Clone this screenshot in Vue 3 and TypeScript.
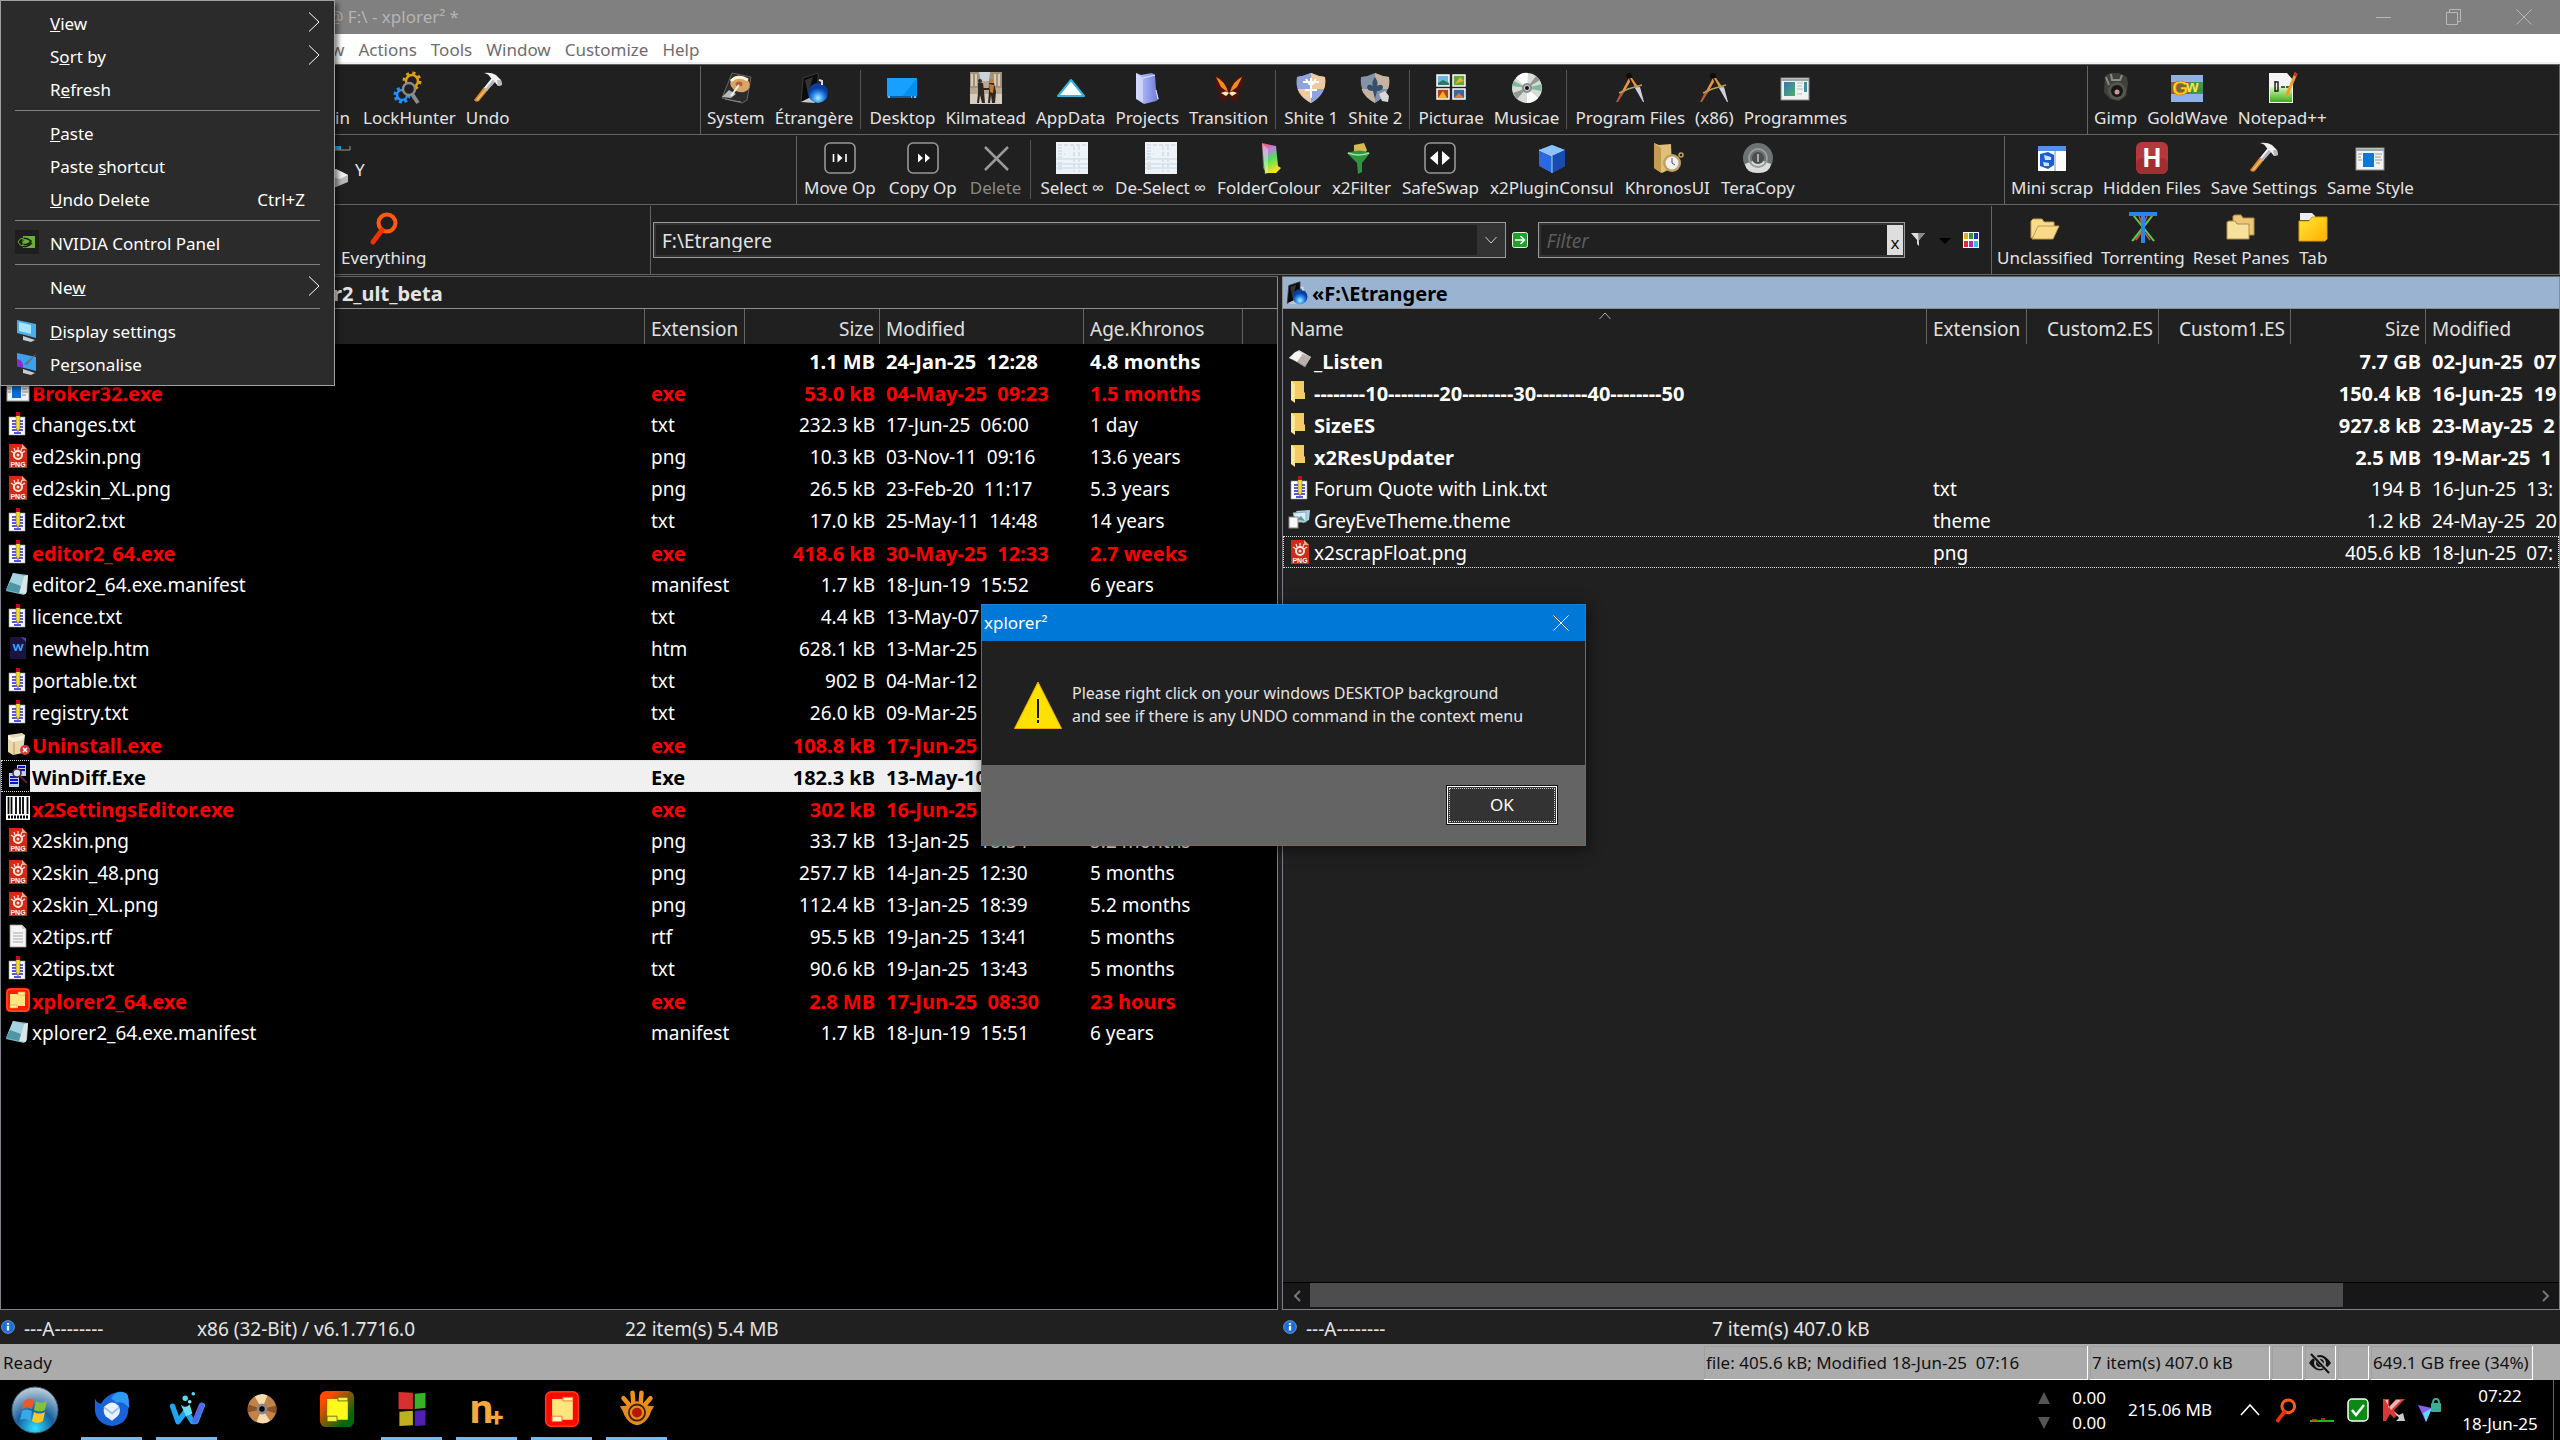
<script setup lang="ts">
interface Tool { icon: string; label: string; off?: boolean }
interface FileRow { icon: string; name: string; ext?: string; size: string; date: string; age?: string; kind?: string }
interface MenuItem { pre?: string; key?: string; post?: string; hint?: string; sub?: boolean; icon?: string; sep?: boolean }

const menuBar = ['w', 'Actions', 'Tools', 'Window', 'Customize', 'Help']

const bar1a: Tool[] = [
  { icon: '', label: 'Bin' },
  { icon: 'lock', label: 'LockHunter' },
  { icon: 'hammer', label: 'Undo' },
]
const bar1b: Tool[][] = [
  [{ icon: 'disk', label: 'System' }, { icon: 'etr', label: 'Étrangère' }],
  [
    { icon: 'desktop', label: 'Desktop' }, { icon: 'photo', label: 'Kilmatead' }, { icon: 'appdata', label: 'AppData' },
    { icon: 'projects', label: 'Projects' }, { icon: 'butterfly', label: 'Transition' },
  ],
  [{ icon: 'shield1', label: 'Shite 1' }, { icon: 'shield2', label: 'Shite 2' }],
  [{ icon: 'pictures', label: 'Picturae' }, { icon: 'cd', label: 'Musicae' }],
  [{ icon: 'compass', label: 'Program Files' }, { icon: 'compass', label: '(x86)' }, { icon: 'programs', label: 'Programmes' }],
]
const bar1c: Tool[] = [
  { icon: 'gimp', label: 'Gimp' }, { icon: 'goldwave', label: 'GoldWave' }, { icon: 'npp', label: 'Notepad++' },
]
const bar2b: Tool[][] = [
  [{ icon: 'moveop', label: 'Move Op' }, { icon: 'copyop', label: 'Copy Op' }, { icon: 'del', label: 'Delete', off: true }],
  [
    { icon: 'sheet', label: 'Select ∞' }, { icon: 'sheet', label: 'De-Select ∞' }, { icon: 'rainbow', label: 'FolderColour' },
    { icon: 'funnel', label: 'x2Filter' }, { icon: 'swap', label: 'SafeSwap' }, { icon: 'cube', label: 'x2PluginConsul' },
    { icon: 'khronos', label: 'KhronosUI' }, { icon: 'tera', label: 'TeraCopy' },
  ],
]
const bar2c: Tool[] = [
  { icon: 'scrap', label: 'Mini scrap' }, { icon: 'hidden', label: 'Hidden Files' },
  { icon: 'hammer', label: 'Save Settings' }, { icon: 'same', label: 'Same Style' },
]
const bar3c: Tool[] = [
  { icon: 'open', label: 'Unclassified' }, { icon: 'torrent', label: 'Torrenting' },
  { icon: 'reset', label: 'Reset Panes' }, { icon: 'tab', label: 'Tab' },
]

const left: FileRow[] = [
  { icon: '', name: '', size: '1.1 MB', date: '24-Jan-25  12:28', age: '4.8 months', kind: 'bold' },
  { icon: 'win', name: 'Broker32.exe', ext: 'exe', size: '53.0 kB', date: '04-May-25  09:23', age: '1.5 months', kind: 'exe' },
  { icon: 'txt', name: 'changes.txt', ext: 'txt', size: '232.3 kB', date: '17-Jun-25  06:00', age: '1 day' },
  { icon: 'png', name: 'ed2skin.png', ext: 'png', size: '10.3 kB', date: '03-Nov-11  09:16', age: '13.6 years' },
  { icon: 'png', name: 'ed2skin_XL.png', ext: 'png', size: '26.5 kB', date: '23-Feb-20  11:17', age: '5.3 years' },
  { icon: 'txt', name: 'Editor2.txt', ext: 'txt', size: '17.0 kB', date: '25-May-11  14:48', age: '14 years' },
  { icon: 'txt', name: 'editor2_64.exe', ext: 'exe', size: '418.6 kB', date: '30-May-25  12:33', age: '2.7 weeks', kind: 'exe' },
  { icon: 'note', name: 'editor2_64.exe.manifest', ext: 'manifest', size: '1.7 kB', date: '18-Jun-19  15:52', age: '6 years' },
  { icon: 'txt', name: 'licence.txt', ext: 'txt', size: '4.4 kB', date: '13-May-07' },
  { icon: 'htm', name: 'newhelp.htm', ext: 'htm', size: '628.1 kB', date: '13-Mar-25' },
  { icon: 'txt', name: 'portable.txt', ext: 'txt', size: '902 B', date: '04-Mar-12' },
  { icon: 'txt', name: 'registry.txt', ext: 'txt', size: '26.0 kB', date: '09-Mar-25' },
  { icon: 'box', name: 'Uninstall.exe', ext: 'exe', size: '108.8 kB', date: '17-Jun-25', kind: 'exe' },
  { icon: 'diff', name: 'WinDiff.Exe', ext: 'Exe', size: '182.3 kB', date: '13-May-10', kind: 'sel' },
  { icon: 'barcode', name: 'x2SettingsEditor.exe', ext: 'exe', size: '302 kB', date: '16-Jun-25', kind: 'exe' },
  { icon: 'png', name: 'x2skin.png', ext: 'png', size: '33.7 kB', date: '13-Jan-25  18:34', age: '5.2 months' },
  { icon: 'png', name: 'x2skin_48.png', ext: 'png', size: '257.7 kB', date: '14-Jan-25  12:30', age: '5 months' },
  { icon: 'png', name: 'x2skin_XL.png', ext: 'png', size: '112.4 kB', date: '13-Jan-25  18:39', age: '5.2 months' },
  { icon: 'rtf', name: 'x2tips.rtf', ext: 'rtf', size: '95.5 kB', date: '19-Jan-25  13:41', age: '5 months' },
  { icon: 'txt', name: 'x2tips.txt', ext: 'txt', size: '90.6 kB', date: '19-Jan-25  13:43', age: '5 months' },
  { icon: 'x2', name: 'xplorer2_64.exe', ext: 'exe', size: '2.8 MB', date: '17-Jun-25  08:30', age: '23 hours', kind: 'exe' },
  { icon: 'note', name: 'xplorer2_64.exe.manifest', ext: 'manifest', size: '1.7 kB', date: '18-Jun-19  15:51', age: '6 years' },
]
const right: FileRow[] = [
  { icon: 'book', name: '_Listen', size: '7.7 GB', date: '02-Jun-25  07', kind: 'bold' },
  { icon: 'folder', name: '--------10--------20--------30--------40--------50', size: '150.4 kB', date: '16-Jun-25  19', kind: 'bold' },
  { icon: 'folder', name: 'SizeES', size: '927.8 kB', date: '23-May-25  2', kind: 'bold' },
  { icon: 'folder', name: 'x2ResUpdater', size: '2.5 MB', date: '19-Mar-25  1', kind: 'bold' },
  { icon: 'txt', name: 'Forum Quote with Link.txt', ext: 'txt', size: '194 B', date: '16-Jun-25  13:' },
  { icon: 'theme', name: 'GreyEveTheme.theme', ext: 'theme', size: '1.2 kB', date: '24-May-25  20' },
  { icon: 'png', name: 'x2scrapFloat.png', ext: 'png', size: '405.6 kB', date: '18-Jun-25  07:', kind: 'focus' },
]

const context: MenuItem[] = [
  { key: 'V', post: 'iew', sub: true },
  { pre: 'S', key: 'o', post: 'rt by', sub: true },
  { pre: 'R', key: 'e', post: 'fresh' },
  { sep: true },
  { key: 'P', post: 'aste' },
  { pre: 'Paste ', key: 's', post: 'hortcut' },
  { key: 'U', post: 'ndo Delete', hint: 'Ctrl+Z' },
  { sep: true },
  { pre: 'NVIDIA Control Panel', icon: 'nvidia' },
  { sep: true },
  { pre: 'Ne', key: 'w', sub: true },
  { sep: true },
  { key: 'D', post: 'isplay settings', icon: 'display' },
  { pre: 'Pe', key: 'r', post: 'sonalise', icon: 'personal' },
]

const tasks = [
  { icon: 'bird', on: true }, { icon: 'wfox', on: true }, { icon: 'disc', on: false }, { icon: 'x2green', on: false },
  { icon: 'squares', on: true }, { icon: 'nplus', on: true }, { icon: 'x2red', on: true }, { icon: 'eye', on: true },
]

const folderPages = '<path d="M9 1l14 3 2 20 3 2-5 5H14l-2 1z" fill="url(#FILL)"/><path d="M9 1l6 6v25l-5-6z" fill="#fff" opacity=".35"/>'
const hammer = '<path d="M2 28L12 15l4 3-9 11q-3 2-5-1z" fill="#d98a2b"/><path d="M5 28L14 17" stroke="#f4bf70" stroke-width="1.500"/><path d="M12 16L21 5l4 3-10 11z" fill="#b4b8bc"/><path d="M13 16l8-10" stroke="#f4f4f4" stroke-width="2"/><path d="M12 1q7-1 12 2l5 5 1 5-4 1-4-5-4-4q-1-3-6-4z" fill="#f1f1f1"/><path d="M25 8l4 0 1 5-4 1z" fill="#bbb"/>'
const compass = '<circle cx="15" cy="4" r="3" fill="#0c0c0c"/><path d="M15 6L8 19l2 1 6-10z" fill="#e8963e"/><path d="M8 18L2 30l2 0 7-11z" fill="#b85a3a"/><path d="M16 6l6 11 3-1L18 6z" fill="#e8963e"/><path d="M21 16l8 14 1 0-4-15z" fill="#cfcfe0"/><path d="M5 21l9-4 14-4" stroke="#b8a05a" stroke-width="1.600" fill="none"/>'
const win32 = '<rect x="2" y="6" width="28" height="22" fill="#f2f2f2" stroke="#8a8a8a"/><path d="M2 8h28" stroke="#9aa" stroke-width="2"/>'
const shieldPath = 'M16 1q6 3 14 4 2 17-14 26Q0 22 2 5q8-1 14-4z'
const op = '<rect x="1" y="1" width="30" height="30" rx="5" fill="#1b1b1b" stroke="#989898" stroke-width="1.6"/>'

const icons: Record<string, string> = {
  lock: '<circle cx="19" cy="9" r="6" fill="none" stroke="#e0a010" stroke-width="2.500"/><circle cx="19" cy="9" r="8" fill="none" stroke="#e0a010" stroke-width="3" stroke-dasharray="3 3.3"/><circle cx="9" cy="23" r="5" fill="none" stroke="#1e90ff" stroke-width="2.500"/><circle cx="9" cy="23" r="7" fill="none" stroke="#1e90ff" stroke-width="3" stroke-dasharray="3 2.5"/><circle cx="16" cy="17" r="6" fill="#222" stroke="#8b8b8b" stroke-width="2.4"/><path d="M19 22l6 9" stroke="#8b8b8b" stroke-width="4"/>',
  hammer,
  disk: '<path d="M12 1l19 4-4 23-5 3L2 26z" fill="#2b2b2b" stroke="#666"/><ellipse cx="20" cy="12" rx="10" ry="8" fill="#d9a468" transform="rotate(20 20 12)"/><path d="M11 9q7-7 17-1" stroke="#fff0d8" stroke-width="3" fill="none"/><ellipse cx="19" cy="12" rx="3.500" ry="2.500" fill="#b85f30"/><path d="M2 25l7-7 7 4-5 4z" fill="#b8b8b8"/><path d="M11 24l8-11" stroke="#f0f0f0" stroke-width="2"/><path d="M5 27l16 3" stroke="#888"/>',
  etr: '<path d="M5 6L20 1v22L3 30z" fill="#0b0b0b" stroke="#3a3a3a"/><path d="M7 8l8-3-5 17z" fill="#333"/><path d="M3 30l10-5 4 6z" fill="#c8c8c8"/><circle cx="20" cy="21" r="10" fill="url(#orb)"/><path d="M21 8l3 1v4" stroke="#ddd" stroke-width="2" fill="none"/>',
  desktop: '<rect x="1" y="6" width="30" height="20" fill="#18a0ff"/><path d="M31 6v20L15 26z" fill="#0b8cf0"/><path d="M1 25h30" stroke="#0b5fa8" stroke-width="2"/><path d="M2 25h2M25 25h1M28 25h2" stroke="#fff" stroke-width="1"/>',
  photo: '<rect width="32" height="32" fill="#b9a894"/><path d="M0 0h32v9H0z" fill="#c9d2dc"/><path d="M0 0h9l3 16H0zM32 0H20l-2 16h14z" fill="#a3917c"/><path d="M2 2v12M6 2v12M25 2v12M29 2v12" stroke="#d6cbb8" stroke-width="2"/><rect y="22" width="32" height="10" fill="#d9cdbd"/><path d="M8 11h5l1 8 1 12h-3l-2-8-1 8H7l1-10zM19 11h5l2 9-1 11h-3l-1-8-1 8h-2l1-12z" fill="#2e2824"/><path d="M12 17h8" stroke="#2e2824" stroke-width="2"/><circle cx="10" cy="9" r="2" fill="#3c2c22"/><circle cx="21" cy="9" r="2" fill="#c07a30"/><path d="M19 12l5 1-1 8-3-1z" fill="#c27a2c"/>',
  appdata: '<path d="M16 8l13 16H3z" fill="#fff" stroke="#35b4dc" stroke-width="2" stroke-linejoin="round"/>',
  projects: '<path d="M5 1l5 2 11-2 3 2 1 15 3 9-3 2-12 3-8-5z" fill="url(#violet)"/><path d="M5 1l7 5v25l-7-5z" fill="#dfe3ff" opacity=".6"/><path d="M12 6l12-3M25 18l2 9" stroke="#e4e8ff" fill="none"/>',
  butterfly: '<path d="M2 3q10 3 14 15Q20 6 30 3q1 12-4 16 0 8-5 11-4-3-5-9-1 6-5 9-5-3-5-11-5-4-4-16z" fill="#4a140c"/><path d="M3 5q9 4 12 15-5-3-7-5zM29 5q-9 4-12 15 5-3 7-5z" fill="#f08a22"/><path d="M8 21q5-3 8 0 3-3 8 0l-5 3-3-3-3 3z" fill="#ffe9b8"/>',
  shield1: `<path d="${shieldPath}" fill="#d8d4dc"/><path d="M16 1q6 3 14 4 1 8-1 12H16zM16 17v14Q5 25 2.500 17z" fill="#f0c8a4"/><path d="M16 1Q8 4 2 5q-1 7 .5 12H16zM16 31q10-6 13-14H16z" fill="#8fa4dc"/><path d="M8 10h16M16 6v20M10 18h12M11 7l4 6M21 7l-4 6" stroke="#fff" stroke-width="2"/>`,
  shield2: `<path d="${shieldPath}" fill="#8293a8"/><path d="M16 1q6 3 14 4 1 8-1 12H16zM16 17v14Q5 25 2.500 17z" fill="#c6b3a0"/><path d="M16 5q4 6 2 9 5-3 6 1 0 4-6 4l-2 8-2-8q-6 0-6-4 1-4 6-1-2-3 2-9z" fill="#35506e"/><path d="M20 22l6-3 4 5-1 6-6-1z" fill="#d8d8d8"/>`,
  pictures: '<g stroke="#fff" stroke-width="1.5"><rect x="2" y="3" width="12" height="11" fill="#6fb5df"/><rect x="18" y="3" width="12" height="11" fill="#62a83a"/><rect x="2" y="17" width="12" height="10" fill="#b4401c"/><rect x="18" y="17" width="12" height="10" fill="#3a66a8"/></g><path d="M3 11l5-3 6 3v2H3z" fill="#2a7a62"/><path d="M20 12l5-7 4 4z" fill="#e8b030"/><path d="M3 26l5-7 4 7z" fill="#f0b020"/><path d="M19 26l5-5 5 5z" fill="#e87a28"/>',
  cd: '<circle cx="16" cy="16" r="15" fill="#d8dcd6"/><path d="M16 16L5 6q5-6 12-5zM16 16l11 10q-4 5-11 5z" fill="#fff"/><path d="M16 16L1 14l2-5zM16 16l15-4-1 7z" fill="#7fb89a"/><path d="M16 16L6 27l-4-6zM16 16L25 4l4 4z" fill="#8f9a8e"/><circle cx="16" cy="16" r="5" fill="#8a9090"/><circle cx="16" cy="16" r="2.500" fill="#111" stroke="#ddd"/>',
  compass,
  programs: win32 + '<rect x="5" y="10" width="11" height="14" fill="url(#bluegreen)"/><path d="M18 11h6M18 14h5M18 17h6M18 22h5" stroke="#bbb"/><rect x="25" y="10" width="3" height="10" fill="#3f8fa0"/>',
  gimp: '<path d="M5 4l5-3h9l8 4 1 7-2 12-7 5-9-2-6-7z" fill="#40403c"/><circle cx="17" cy="19" r="9" fill="#55554e"/><circle cx="17" cy="19" r="6" fill="#171717"/><circle cx="17" cy="20" r="2.500" fill="#c99"/><path d="M6 5l3 8M11 2l1 6h8l2-5" stroke="#8d8d84" stroke-width="2" fill="none"/>',
  goldwave: '<rect y="3" width="32" height="27" fill="#8fb0e8"/><path d="M0 10h32v12H0z" fill="#b04848"/><path d="M18 10h14v12H18z" fill="#3c9a4a"/><path d="M0 14q8-9 16 0t16 0v6H0z" fill="#384" opacity=".5"/><text x="1" y="23" font-size="21" font-weight="bold" font-family="Liberation Sans, sans-serif" fill="#ffd21c" stroke="#a86a00" stroke-width=".5">G</text><text x="15" y="20" font-size="16" font-weight="bold" font-family="Liberation Sans, sans-serif" fill="#ffe23c">w</text>',
  npp: '<path d="M3 1h18l6 7v23H3z" fill="#f4f4f4"/><path d="M4 15h22v15H4z" fill="url(#green)"/><path d="M9 9v11M9 10h3v9H9M15 15h4M20 15h4" stroke="#222" stroke-width="1.500" fill="none"/><path d="M29 0l2 3-9 21-3 2 1-5z" fill="#f0a020"/><path d="M29 0l3 2-2 3-2-2z" fill="#d23"/>',
  moveop: op + '<path d="M9.500 12v8M22 12v8" stroke="#fff" stroke-width="1.600"/><path d="M13.500 11.500l5 4.500-5 4.500z" fill="#fff"/>',
  copyop: op + '<path d="M11 11.500l5 4.500-5 4.500zM18 11.500l5 4.500-5 4.500z" fill="#fff"/>',
  swap: op + '<path d="M14 9v14l-8-7zM18 9v14l8-7z" fill="#fff"/>',
  del: '<path d="M5 5l23 23M28 5L5 28" stroke="#9a9a9a" stroke-width="2.500"/>',
  sheet: '<rect width="32" height="32" fill="#eef3f8"/><path d="M2 3h28M2 6h6M2 9h5M2 12h7M2 15h6M2 21h6M2 24h5M2 27h6M18 4v26M23 4v26" stroke="#c6d0d9" stroke-width="1" stroke-dasharray="4 2"/><path d="M0 17h32M0 22h32M0 26h32" stroke="#cfe4f0" stroke-width="1.500"/>',
  rainbow: folderPages.replace('FILL', 'rain'),
  funnel: '<path d="M9 3l10-2 3 7-5 9H9z" fill="#d8b850"/><path d="M2 11q13-5 23 0l-8 10v9l-4 2-1-11z" fill="#2f9440"/><path d="M3 11q11 4 21 0" stroke="#9fe0a0" stroke-width="1.500" fill="none"/>',
  cube: '<path d="M16 3l13 5v16l-13 7-13-7V8z" fill="#2a6ae0"/><path d="M16 3l13 5-13 6L3 8z" fill="#8ec2ff"/><path d="M16 14v17l13-7V8z" fill="#184cb0"/><path d="M3 8l13 6v17" fill="none" stroke="#a9d0ff"/>',
  khronos: '<path d="M3 1l5 2 12-1 1 24-10 5-8-5z" fill="#e0c078"/><path d="M3 1l7 5v25l-7-5z" fill="#c49c50"/><circle cx="21" cy="21" r="9" fill="#c2a060"/><circle cx="21" cy="21" r="6.500" fill="#eef0f2"/><path d="M21 16v5l3 2" stroke="#555" fill="none"/><circle cx="30" cy="13" r="2" fill="none" stroke="#c2a060" stroke-width="1.500"/>',
  tera: '<circle cx="16" cy="16" r="15" fill="#6d7372"/><path d="M3 22q1 9 13 9t13-9l-8-3q-5 5-10 0z" fill="#dcdcdc"/><circle cx="16" cy="16" r="9" fill="none" stroke="#989c9b" stroke-width="2"/><circle cx="16" cy="16" r="6" fill="#4a4f4e"/><path d="M16 12v8" stroke="#aaa" stroke-width="2"/>',
  scrap: '<rect x="2" y="4" width="28" height="25" fill="#fff"/><rect x="2" y="4" width="28" height="5" fill="#5590ec"/><path d="M4 12l8-2 6 3v10l-6 4-8-3z" fill="#1b5fd0"/><path d="M8 13l7 2v3H9zM7 20l6 1v3H8z" fill="#cfe3ff"/><path d="M19 9v20" stroke="#88a"/>',
  hidden: '<rect width="32" height="32" rx="6" fill="#b5383c"/><rect y="16" width="32" height="16" rx="6" fill="#a02e32"/><text x="16" y="25" text-anchor="middle" font-size="26" font-weight="bold" font-family="Roboto, sans-serif" fill="#fff">H</text>',
  same: win32 + '<rect x="9" y="11" width="11" height="14" fill="#0a78d7"/><path d="M4 12h4M4 15h3M4 18h4M21 12h7M21 15h6M21 18h7M22 21h4" stroke="#999"/>',
  open: '<path d="M2 26V9l2-2h9l2 3h10v4z" fill="#f7dc90" stroke="#c89a48"/><path d="M9 14h21l-6 13H3z" fill="#f9d98a" stroke="#c89a48"/>',
  torrent: '<path d="M6 3l21 26M6 29L26 3M12 4l5 13-8 11M20 4l-5 13 8 11" stroke="#d05050" stroke-width="1.500" fill="none"/><path d="M5 29L25 4M27 29L7 4" stroke="#4ad04a" stroke-width="2"/><path d="M2 2h28M16 2v29" stroke="#2a86ea" stroke-width="4"/>',
  reset: '<path d="M8 11V4l2-1h6l2 3h11v17H8z" fill="#e9c878" stroke="#b68c40"/><path d="M2 27V10l2-1h6l2 3h12v15z" fill="#f5e19c" stroke="#b68c40"/>',
  tab: '<path d="M3 1h12l3 3v4H3z" fill="#e8edf2"/><path d="M2 9h10l3-4h15v22l-2 2H2z" fill="url(#gold)" stroke="#e09a10"/>',
  search: '<circle cx="19" cy="11" r="8.500" fill="none" stroke="#ff5a10" stroke-width="4"/><path d="M14 18L5 30" stroke="#f03008" stroke-width="5" stroke-linecap="round"/>',
  // 24 × 24 file icons
  win: '<rect x="1" y="1" width="22" height="20" fill="#f2f2f2" stroke="#999"/><rect x="6" y="4" width="9" height="14" fill="#0a6fd0"/><path d="M2 6h3M2 9h3M2 12h3M16 6h6M16 9h5M16 12h6M16 15h4" stroke="#888"/>',
  txt: '<path d="M3 5h16v18H3z" fill="#fff" stroke="#999" stroke-width=".6"/><path d="M6 9h11M6 12h11M6 15h11M6 18h11M8 21h7" stroke="#22c" stroke-width="1.500"/><path d="M10 3h4v13l-2 4-2-4z" fill="#f2dc3c" stroke="#6a5a10" stroke-width=".5"/><path d="M10 0h4v4h-4z" fill="#d00028"/>',
  png: '<path d="M3 0h13l5 5v19H3z" fill="#d42a12"/><path d="M16 0l5 5h-5z" fill="#f0a090"/><circle cx="12" cy="11" r="4" fill="none" stroke="#f3e8e4" stroke-width="2"/><circle cx="12" cy="11" r="1.500" fill="#f3e8e4"/><path d="M8 4l1 3M12 3v4M16 4l-1 3M5 7l3 2M19 7l-3 2" stroke="#f3e8e4" stroke-width="1.200"/><text x="12" y="22.500" text-anchor="middle" font-size="7" font-weight="bold" font-family="Liberation Sans, sans-serif" fill="#fff">PNG</text>',
  note: '<path d="M7 1l15 2-1 17-3 3L0 19z" fill="#7ebcc9"/><path d="M7 1l11 3-5 17L0 18z" fill="#a5d4de"/><path d="M13 21L18 4l4-1-2 19z" fill="#dfe5e6"/><path d="M4 10l11 4-2 7L0 18z" fill="#4f96a8"/>',
  htm: '<path d="M4 1h12l4 4v18H4z" fill="#1b1340"/><path d="M15 1l5 5V2z" fill="#4b46b0"/><text x="12" y="15" text-anchor="middle" font-size="14" font-weight="bold" font-family="Lato, sans-serif" fill="#35a8ff">w</text>',
  box: '<path d="M2 3l14-2 3 2-2 18-10 2-5-3z" fill="#e8d8b0"/><path d="M2 3l5 3 12-3-2 5-10 2-5-3z" fill="#f9f2df"/><path d="M8 10v12" stroke="#c8903c"/><circle cx="19" cy="18" r="5" fill="#d04040"/><path d="M17 16l4 4M21 16l-4 4" stroke="#fff" stroke-width="1.500"/>',
  diff: '<rect x="11" y="1" width="9" height="11" fill="#b9d4ee"/><rect x="3" y="9" width="10" height="14" fill="#b9d4ee"/><path d="M12 3h7M12 6h7M4 13h8M4 16h8M4 19h8" stroke="#11c" stroke-width="2"/><circle cx="11" cy="9" r="4" fill="#cfe4ff" stroke="#5a2040" stroke-width="1.600"/><path d="M14 12l7 7" stroke="#5a2040" stroke-width="2"/>',
  barcode: '<rect width="24" height="24" fill="#fff"/><path d="M2.500 1v17M5.500 1v17M10 1v17M14 1v17M17 1v17M21.500 1v17" stroke="#000" stroke-width="1.800"/><path d="M2 21h20" stroke="#000" stroke-width="3" stroke-dasharray="2 1"/>',
  rtf: '<path d="M4 1h12l4 4v18H4z" fill="#f5f5f5" stroke="#999" stroke-width=".8"/><path d="M7 9h10M7 12h10M7 15h10M7 18h10" stroke="#a8a8a8"/><path d="M16 1v4h4" fill="#ccc"/>',
  x2: '<rect width="24" height="24" rx="4" fill="#ff1a00"/><rect x="1" y="1" width="22" height="22" rx="4" fill="none" stroke="#ff6a30"/><path d="M4 6h8V4h7v14h-7v2H4z" fill="#ffe680"/><path d="M12 4h7v3h-7zM4 17h7v3H4z" fill="#fff3b8" stroke="#e0a020" stroke-width=".7"/>',
  book: '<path d="M1 10L11 2l12 7-6 9z" fill="#ddd"/><path d="M1 10l5-5q4-4 8 1l-5 8q-3-4-8-4z" fill="#f7f5f0"/><path d="M9 14l6-8 8 3-6 10z" fill="#b8b2aa"/><path d="M9 14l8 5 1-2" stroke="#777" fill="none"/>',
  folder: '<path d="M3 1h13v11l1 1v6H3z" fill="#f3cc62"/><path d="M3 1l4 3v19l-4-3z" fill="#fde79a"/>',
  theme: '<path d="M8 3l14-1-1 10-6 3z" fill="#a8d4e4"/><path d="M5 5l13-1v10H8z" fill="#d9eef4" stroke="#8ab"/><path d="M8 12l5-4 4 5z" fill="#5a9a9a"/><rect x="1" y="9" width="9" height="11" fill="#f8f8f8" stroke="#888"/>',
  nvidia: '<rect width="24" height="24" fill="#1e1e1e"/><path d="M8 6h12v12H8z" fill="#6fae3c"/><path d="M3 12q6-7 13-1-3 5-8 3-2-2 1-4M5 14q5 6 12-1" stroke="#16240a" stroke-width="1.500" fill="none"/><path d="M3 12q2-4 5-4v8q-3 0-5-4z" fill="none" stroke="#6fae3c"/>',
  display: '<path d="M2 2l19 4v14L2 15z" fill="#48aef0"/><path d="M4 4l12 3v9L4 13z" fill="#a8e4ff"/><path d="M8 18l6 2 6 2-4 2-8-2z" fill="#c4ccd4"/>',
  personal: '<path d="M2 2l19 4v14L2 15z" fill="#3aa0f0"/><path d="M2 8q7 2 6 9l-6-2z" fill="#8a28d8"/><path d="M22 2L9 13l3 1z" fill="#6a7078"/><path d="M8 18l6 2 6 2-4 2-8-2z" fill="#c4ccd4"/>',
  info: '<circle cx="12" cy="12" r="11" fill="#1b6fd8" stroke="#9cc4f4" stroke-width="1"/><path d="M12 10v8M12 5v3" stroke="#fff" stroke-width="4"/>',
  // taskbar, 40 × 40
  bird: '<path d="M1 8q2 6 7 6Q13 4 26 1q9-1 11 6l2 3-1 13Q36 37 20 39 3 37 1 22z" fill="#1a62d8"/><path d="M19 8q6-8 13-7 6 1 6 6l1 12q-6-8-14-6z" fill="#2f9af4"/><path d="M12 17q8-8 15-1 4 7-1 12l-6 5-7-5q-4-5-1-11z" fill="#e8f2fc"/><path d="M11 18l9 7 8-7" fill="none" stroke="#9cc4ee" stroke-width="2"/>',
  wfox: '<path d="M4 17l6 17 9-12 7 12h4l7-18" fill="none" stroke="#1ea4f0" stroke-width="6" stroke-linejoin="round" stroke-linecap="round"/><path d="M29 33l7-17" stroke="#5668e8" stroke-width="6" stroke-linecap="round"/><path d="M13 15q5 5 10 0l3 10-7 3z" fill="#60e0f0"/><circle cx="18" cy="8" r="3" fill="#5ad8ee"/><circle cx="27" cy="3" r="2" fill="#5ad8ee"/><circle cx="23" cy="12" r="2" fill="#8cf0f4"/>',
  disc: '<circle cx="20" cy="20" r="16" fill="#c08448"/><path d="M20 20L12 6q8-5 14-1zM20 20l9 13q-7 5-15 1z" fill="#f4dcb0"/><path d="M20 20L4 24l1-9zM20 20l16-4v9z" fill="#8a5424"/><circle cx="20" cy="20" r="6" fill="#888"/><circle cx="20" cy="20" r="3" fill="#000"/>',
  x2green: '<rect x="1" y="0" width="38" height="40" rx="7" fill="url(#rg)"/><path d="M9 9h12V7h11v25H20v2H9z" fill="#fff81c"/><path d="M21 7h11v4H21zM9 28h11v6H9z" fill="#f0f840" stroke="#6a6a10"/>',
  squares: '<path d="M5 1l16 1v18L5 20z" fill="#d83030"/><path d="M23 3l12-1v17l-12 1z" fill="#38b028"/><path d="M6 23l15-1v16L6 39z" fill="#c0b020"/><path d="M23 22l12-1v17l-12 1z" fill="#5020b0"/>',
  nplus: '<text x="1" y="36" font-size="46" font-weight="bold" font-family="Roboto, sans-serif" fill="#f8a838">n</text><text x="23" y="39" font-size="28" font-weight="bold" font-family="Roboto, sans-serif" fill="#f8a838">+</text>',
  x2red: '<rect x="1" y="0" width="38" height="40" rx="7" fill="#ff0800"/><rect x="2" y="1" width="36" height="38" rx="6" fill="none" stroke="#ff5a20"/><path d="M9 9h12V7h11v25H20v2H9z" fill="#ffe67c"/><path d="M21 7h11v4H21zM9 28h11v6H9z" fill="#fff6c8" stroke="#e87030"/>',
  eye: '<path d="M5 8l7 8M15 2l1 12M25 2l-1 12M35 8l-7 8" stroke="#f09018" stroke-width="5" stroke-linecap="round"/><path d="M1 17q9 0 19-6 10 6 19 6-4 6-5 10-5 10-14 11-9-1-14-11-1-4-5-10z" fill="#e88a18"/><circle cx="20" cy="24" r="9" fill="none" stroke="#3a2008" stroke-width="2"/><circle cx="20" cy="24" r="5.500" fill="#b01808"/>',
}
</script>

<template>
  <div class="screen">
    <svg class="defs" width="0" height="0" aria-hidden="true">
      <defs>
        <radialGradient id="orb" cy=".75"><stop stop-color="#a8f0ff" /><stop offset=".6" stop-color="#2684e8" /><stop offset="1" stop-color="#0a3fa0" /></radialGradient>
        <linearGradient id="violet"><stop stop-color="#c4ccff" /><stop offset="1" stop-color="#6a78d8" /></linearGradient>
        <linearGradient id="rain" x2=".3" y2="1"><stop stop-color="#f05050" /><stop offset=".3" stop-color="#c080e0" /><stop offset=".6" stop-color="#50e060" /><stop offset="1" stop-color="#f8e020" /></linearGradient>
        <linearGradient id="green" y2="1" x2="0"><stop stop-color="#d8f8c0" /><stop offset="1" stop-color="#38b010" /></linearGradient>
        <linearGradient id="bluegreen" x2="1" y2="1"><stop stop-color="#3a78b8" /><stop offset="1" stop-color="#4fae6a" /></linearGradient>
        <linearGradient id="gold" x2="1" y2="1"><stop stop-color="#ffe838" /><stop offset="1" stop-color="#ffae00" /></linearGradient>
        <linearGradient id="rg" x2="1" y2="1"><stop offset=".2" stop-color="#ff4a00" /><stop offset=".8" stop-color="#006a08" /></linearGradient>
        <radialGradient id="start" cy=".9" r=".9"><stop stop-color="#30e0ff" /><stop offset=".45" stop-color="#1560a0" /><stop offset="1" stop-color="#c8d4dc" /></radialGradient>
      </defs>
    </svg>

    <header class="title">
      <span class="title-text">@ F:\ - xplorer² *</span>
      <span class="win-buttons">
        <button aria-label="Minimise"><svg viewBox="0 0 16 16"><path d="M0 8.500h15" /></svg></button>
        <button aria-label="Restore"><svg viewBox="0 0 16 16"><path d="M.5 3.500h11v12H.5zM3.500 3.500v-3h11v12h-3" /></svg></button>
        <button aria-label="Close"><svg viewBox="0 0 16 16"><path d="M.5.5l15 15M15.500.5l-15 15" /></svg></button>
      </span>
    </header>

    <nav class="menubar"><button v-for="m in menuBar" :key="m">{{ m }}</button></nav>

    <section class="band band1">
      <div class="group covered">
        <button v-for="t in bar1a" :key="t.label" class="tool">
          <svg viewBox="0 0 32 32" v-html="t.icon ? icons[t.icon] : ''" /><span>{{ t.label }}</span>
        </button>
      </div>
      <div class="group">
        <div v-for="(set, i) in bar1b" :key="i" class="set">
          <button v-for="t in set" :key="t.label" class="tool">
            <svg viewBox="0 0 32 32" v-html="icons[t.icon]" /><span>{{ t.label }}</span>
          </button>
        </div>
      </div>
      <div class="group">
        <button v-for="t in bar1c" :key="t.label" class="tool">
          <svg viewBox="0 0 32 32" v-html="icons[t.icon]" /><span>{{ t.label }}</span>
        </button>
      </div>
    </section>

    <section class="band band2">
      <div class="group drives">
        <svg viewBox="0 0 24 48">
          <path d="M0 9h22V5" fill="none" stroke="#999" /><path d="M0 5h13v4H0z" fill="#2aa0dc" />
          <path d="M0 29l8-1 12 6v7L8 46H0z" fill="#b8b8b8" /><path d="M0 29l8-1 12 6-8 4-12-3z" fill="#f0f0f0" />
        </svg>
        <span>Y</span>
      </div>
      <div class="group wide">
        <div v-for="(set, i) in bar2b" :key="i" class="set">
          <button v-for="t in set" :key="t.label" class="tool" :disabled="t.off">
            <svg viewBox="0 0 32 32" v-html="icons[t.icon]" /><span>{{ t.label }}</span>
          </button>
        </div>
      </div>
      <div class="group">
        <button v-for="t in bar2c" :key="t.label" class="tool">
          <svg viewBox="0 0 32 32" v-html="icons[t.icon]" /><span>{{ t.label }}</span>
        </button>
      </div>
    </section>

    <section class="band band3">
      <div class="group search">
        <button class="tool"><svg viewBox="0 0 32 32" v-html="icons.search" /><span>Everything</span></button>
      </div>
      <div class="group address">
        <div class="combo">
          <input value="F:\Etrangere" aria-label="Address" />
          <button aria-label="Show history"><svg viewBox="0 0 12 8"><path d="M.5 1l5.500 6 5.500-6" /></svg></button>
        </div>
        <button class="go" aria-label="Go">
          <svg viewBox="0 0 16 16"><rect x=".5" y=".5" width="15" height="15" rx="2" fill="#1fa02c" stroke="#e6f4e6" /><path d="M3 8h9M8.500 4l4 4-4 4" fill="none" stroke="#fff" stroke-width="1.600" /></svg>
        </button>
        <div class="filter">
          <input placeholder="Filter" aria-label="Filter" />
          <button aria-label="Clear filter">x</button>
        </div>
        <svg class="mini" viewBox="0 0 16 16"><path d="M1 1h14L9 8v6l-2-2V8z" fill="#ddd" /><path d="M8 1h7L9 8v6z" fill="#888" /></svg>
        <svg class="mini arrow" viewBox="0 0 16 16"><path d="M2 6h12l-6 6z" fill="#000" /></svg>
        <svg class="mini" viewBox="0 0 16 16"><path d="M0 0h16v16H0z" fill="#fff" /><path d="M1 1h4v6H1z" fill="#e8a820" /><path d="M6 1h4v6H6z" fill="#20a020" /><path d="M11 1h4v6h-4z" fill="#2828c8" /><path d="M1 9h4v6H1z" fill="#e82828" /><path d="M6 9h4v6H6z" fill="#c020c0" /><path d="M11 9h4v6h-4z" fill="#20c8e8" /></svg>
      </div>
      <div class="group tight">
        <button v-for="t in bar3c" :key="t.label" class="tool">
          <svg viewBox="0 0 32 32" v-html="icons[t.icon]" /><span>{{ t.label }}</span>
        </button>
      </div>
    </section>

    <main class="panes">
      <section class="pane pane-left">
        <h2 class="covered-title">er2_ult_beta</h2>
        <div class="list">
          <table>
            <colgroup><col class="c-name" /><col class="c-ext" /><col class="c-size" /><col class="c-date" /><col class="c-age" /><col /></colgroup>
            <thead><tr><th></th><th>Extension</th><th class="num">Size</th><th>Modified</th><th>Age.Khronos</th><th></th></tr></thead>
            <tbody>
              <tr v-for="(f, i) in left" :key="i" :class="f.kind">
                <td class="name"><div><svg viewBox="0 0 24 24" v-html="f.icon ? icons[f.icon] : ''" /><span>{{ f.name }}</span></div></td>
                <td>{{ f.ext }}</td><td class="num">{{ f.size }}</td><td>{{ f.date }}</td><td>{{ f.age }}</td><td></td>
              </tr>
            </tbody>
          </table>
        </div>
        <footer>
          <svg viewBox="0 0 24 24" v-html="icons.info" /><span class="f-attr">---A--------</span>
          <span class="f-ver">x86 (32-Bit) / v6.1.7716.0</span><span>22 item(s) 5.4 MB</span>
        </footer>
      </section>

      <section class="pane pane-right">
        <h2><svg viewBox="0 0 32 32" v-html="icons.etr" />«F:\Etrangere</h2>
        <div class="list">
          <table>
            <colgroup><col class="c-name" /><col class="c-ext" /><col class="c-custom" /><col class="c-custom" /><col class="c-size" /><col /></colgroup>
            <thead>
              <tr>
                <th class="sorted">Name<svg viewBox="0 0 12 8"><path d="M.5 7L6 1l5.500 6" /></svg></th>
                <th>Extension</th><th class="num">Custom2.ES</th><th class="num">Custom1.ES</th><th class="num">Size</th><th>Modified</th>
              </tr>
            </thead>
            <tbody>
              <tr v-for="(f, i) in right" :key="i" :class="f.kind">
                <td class="name"><div><svg viewBox="0 0 24 24" v-html="icons[f.icon]" /><span>{{ f.name }}</span></div></td>
                <td>{{ f.ext }}</td><td></td><td></td><td class="num">{{ f.size }}</td><td>{{ f.date }}</td>
              </tr>
            </tbody>
          </table>
          <div class="scroll">
            <button aria-label="Scroll left"><svg viewBox="0 0 8 12"><path d="M7 1L2 6l5 5" /></svg></button>
            <div class="track"><div class="thumb"></div></div>
            <button aria-label="Scroll right"><svg viewBox="0 0 8 12"><path d="M1 1l5 5-5 5" /></svg></button>
          </div>
        </div>
        <footer>
          <svg viewBox="0 0 24 24" v-html="icons.info" /><span class="f-attr2">---A--------</span><span>7 item(s) 407.0 kB</span>
        </footer>
      </section>
    </main>

    <section class="status">
      <span class="ready">Ready</span>
      <span class="cell s-file">file: 405.6 kB; Modified 18-Jun-25&nbsp; 07:16</span>
      <span class="cell s-items">7 item(s) 407.0 kB</span>
      <span class="cell s-small"></span>
      <span class="cell s-small"><svg viewBox="0 0 24 24"><path d="M1 12q11-16 22 0-11 15-22 0z" fill="#111" /><circle cx="12" cy="12" r="5" fill="none" stroke="#ababab" stroke-width="2" /><path d="M3 2l19 20" stroke="#ababab" stroke-width="4" /><path d="M3 3l18 19" stroke="#111" stroke-width="2" /></svg></span>
      <span class="cell s-small"></span>
      <span class="cell s-free">649.1 GB free (34%)</span>
    </section>

    <section class="taskbar">
      <button class="start" aria-label="Start">
        <svg viewBox="0 0 48 48"><circle cx="24" cy="24" r="23" fill="url(#start)" stroke="#3a6078" /><path d="M13 15q5-4 10-1l-2 9q-5-3-10 0z" fill="#e85a28" /><path d="M25 15q5 3 11 0l-2 9q-5 3-11 0z" fill="#84c040" /><path d="M11 25q5-3 10 0l-2 10q-5-4-10-1z" fill="#38a8e8" /><path d="M23 26q5 3 11 0l-2 9q-6 4-11 0z" fill="#f8c828" /></svg>
      </button>
      <button v-for="t in tasks" :key="t.icon" class="task" :class="{ on: t.on }" :aria-label="t.icon"><svg viewBox="0 0 40 40" v-html="icons[t.icon]" /></button>
      <div class="tray">
        <div class="net">
          <span><svg viewBox="0 0 14 14"><path d="M7 1l6 12H1z" /></svg>0.00</span>
          <span><svg viewBox="0 0 14 14"><path d="M7 13L1 1h12z" /></svg>0.00</span>
        </div>
        <span class="mem">215.06 MB</span>
        <svg viewBox="0 0 24 24"><path d="M3 17l9-10 9 10" fill="none" stroke="#fff" stroke-width="1.600" /></svg>
        <svg viewBox="0 0 32 32" v-html="icons.search" />
        <svg viewBox="0 0 24 24"><path d="M0 23h24" stroke="#1f1" stroke-width="1.500" /><path d="M2 22h5M11 21h4" stroke="#f22" stroke-width="1.500" /></svg>
        <svg viewBox="0 0 24 24"><rect x="2" y="1" width="20" height="22" rx="4" fill="#0a8a12" stroke="#fff" stroke-width="1.500" /><path d="M6 12l4 5 8-10" fill="none" stroke="#fff" stroke-width="2.500" /></svg>
        <svg viewBox="0 0 24 24"><path d="M1 1h6v8l7-8h9L12 12l4 5-4 3-4-4-4 7H1z" fill="#d83838" /><path d="M3 2h3v8l8-8h5L9 12z" fill="#f4b4b4" /><path d="M12 14l5 3 4-2 2 8h-9l3-3z" fill="#ccc" /></svg>
        <svg viewBox="0 0 24 24"><path d="M0 7l14 3-6 14z" fill="#8c5cf0" /><path d="M5 15l9-5-6 14z" fill="#5adcf4" /><rect x="13" y="5" width="10" height="9" rx="1" fill="#38b098" /><path d="M15 5q0-4 3-4t3 4" fill="none" stroke="#38b098" stroke-width="2" /></svg>
        <div class="clock"><span>07:22</span><span>18-Jun-25</span></div>
        <i class="peek"></i>
      </div>
    </section>

    <div class="dialog" role="dialog" aria-label="xplorer²">
      <div class="d-title"><span>xplorer²</span><button aria-label="Close dialog"><svg viewBox="0 0 16 16"><path d="M.5.5l15 15M15.500.5l-15 15" /></svg></button></div>
      <div class="d-body">
        <svg viewBox="0 0 48 48"><path d="M24 1l23.500 46.500H.5z" fill="#ffe100" stroke="#f0a800" /><path d="M24 18v19M24 39v3" stroke="#111" stroke-width="2" /></svg>
        <p>Please right click on your windows DESKTOP background<br />and see if there is any UNDO command in the context menu</p>
      </div>
      <div class="d-foot"><button>OK</button></div>
    </div>

    <div class="context" role="menu">
      <template v-for="(c, i) in context" :key="i">
        <hr v-if="c.sep" />
        <button v-else role="menuitem">
          <svg class="ci" viewBox="0 0 24 24" v-html="c.icon ? icons[c.icon] : ''" />
          <span>{{ c.pre }}<u>{{ c.key }}</u>{{ c.post }}</span>
          <span v-if="c.hint" class="hint">{{ c.hint }}</span>
          <svg v-if="c.sub" class="chev" viewBox="0 0 12 20"><path d="M1 .5L11 10 1 19.500" /></svg>
        </button>
      </template>
    </div>
  </div>
</template>

<style>
body { margin: 0; background: #202020; }
</style>

<style scoped>
.screen { position: relative; display: flex; flex-direction: column; min-height: 100vh; overflow: hidden; background: #202020; color: #e4e4e4; font: 17px/22px "Noto Sans", "Open Sans", sans-serif; white-space: nowrap; }
.defs { position: absolute; }
button { margin: 0; padding: 0; border: 0; background: none; color: inherit; font: inherit; white-space: nowrap; }
input { min-width: 0; padding: 0; border: 0; background: none; color: inherit; font: inherit; outline: 0; }
svg { display: block; flex: none; overflow: visible; }

.title { display: flex; height: 34px; background: #808080; color: #b4b4b4; align-items: center; justify-content: space-between; }
.title-text { width: 459px; text-align: right; }
.win-buttons { display: flex; padding-right: 1px; }
.win-buttons button { display: flex; width: 70px; justify-content: center; }
.win-buttons svg { width: 16px; height: 16px; fill: none; stroke: #b8b8b8; }

.menubar { display: flex; height: 28px; padding-left: 324px; background: #fff; border-bottom: 2px solid #f0f0f0; color: #6d6d6d; }
.menubar button { padding: 0 7px; line-height: 32px; }

.band { display: grid; height: 69px; border-top: 1px solid #646464; border-right: 1px solid #646464; }
.band1 { grid-template-columns: 700px 1fr 472px; }
.band2 { grid-template-columns: 796px 1fr 555px; }
.band3 { grid-template-columns: 650px 1fr 568px; border-bottom: 1px solid #646464; }
.group { display: flex; padding-left: 1px; }
.group + .group { margin-top: 1px; border-left: 1px solid #646464; }
.set { display: flex; }
.set + .set { border-left: 1px solid #555; margin: 4px 0 5px 2px; padding-left: 3px; }
.set + .set .tool { margin-top: -4px; }
.wide { padding-left: 2px; }
.wide .set { gap: 3px; }
.wide .set + .set { gap: 1px; margin-left: 4px; padding-left: 4px; }
.covered { padding-left: 316px; }
.tool { display: flex; flex-direction: column; align-items: center; gap: 3px; padding: 6px 5px 0; }
.tight .tool { padding: 6px 4px 0; }
.group:first-child .tool { padding-top: 7px; }
.tool svg { width: 32px; height: 32px; }
.tool:disabled { color: #8a8a8a; }
.drives { padding-left: 328px; align-items: flex-start; gap: 3px; padding-top: 6px; }
.drives svg { width: 24px; height: 48px; }
.drives span { line-height: 58px; }
.search { padding-left: 336px; }

.address { align-items: center; font-size: 19px; gap: 0; padding: 0 12px 0 2px; }
.combo, .filter { display: flex; box-sizing: border-box; height: 36px; border: 1px solid #9a9a9a; box-shadow: inset 0 0 0 2px #333; }
.combo { flex: 852 1 0; }
.combo input, .filter input { flex: 1; padding: 2px 0 0 8px; }
.combo button { display: flex; width: 28px; background: #333; align-items: center; justify-content: center; }
.combo button svg { width: 12px; height: 8px; fill: none; stroke: #ccc; }
.go { margin: 0 10px 0 6px; }
.go svg { width: 16px; height: 16px; }
.filter { flex: 366 1 0; margin-right: 5px; outline: 0; }
.filter input::placeholder { color: #5c5c5c; font-style: italic; opacity: 1; }
.filter button { width: 16px; margin: 2px 1px 2px 0; background: #dedede; color: #111; font-size: 17px; line-height: 36px; }
.mini { width: 16px; height: 16px; }
.arrow { margin: 0 10px 0 11px; }

.panes { display: flex; flex: 1; gap: 4px; padding-top: 1px; min-height: 0; }
.pane { display: flex; flex: 1 1 0; flex-direction: column; min-width: 0; border-top: 1px solid #646464; font-size: 19px; }
h2 { display: flex; align-items: center; height: 31px; margin: 0; border: 1px solid #8c8c8c; border-width: 0 1px 1px; font-size: 20px; line-height: 34px; font-weight: 700; }
.pane-left h2 { border-left: 0; }
.covered-title { padding-left: 321px; }
h2 { box-sizing: border-box; height: 32px; padding-top: 2px; }
.pane-right h2 { background: #9ab3d1; color: #000; }
.pane-right h2 svg { width: 24px; height: 24px; margin: -2px 3px 0 2px; }
.list { display: flex; flex: 1; flex-direction: column; border: 1px solid #7f8289; border-top: 0; overflow: hidden; }
.pane-left .list { background: #000; }
table { width: 100%; border-spacing: 0; border-collapse: separate; table-layout: fixed; }
.c-name { width: 644px; }
.c-ext { width: 100px; }
.c-size { width: 135px; }
.c-date { width: 204px; }
.c-age { width: 159px; }
.c-custom { width: 132px; }
th { box-sizing: border-box; height: 35px; padding: 4px 6px 0; border-right: 1px solid #646464; background: #202020; color: #e0e0e0; text-align: left; font-weight: 400; line-height: 30px; }
th:last-child { border-right: 0; }
th.num, td.num { text-align: right; padding-right: 5px; }
.sorted { position: relative; padding-left: 7px; }
.sorted svg { position: absolute; top: 3px; left: calc(50% - 6px); width: 12px; height: 8px; fill: none; stroke: #aaa; }
td { height: 32px; padding: 2px 0 0 6px; box-sizing: border-box; overflow: hidden; color: #fff; line-height: 30px; white-space: pre; }
tbody td { padding-top: 3px; line-height: 29px; }
tbody td.name { padding: 0; }
.name div { display: flex; align-items: center; height: 32px; padding-left: 5px; }
.name svg { width: 24px; height: 24px; }
.name span { flex: 1; padding: 3px 0 0 2px; }
.bold td, .exe td, .sel td { font-size: 20px; font-weight: 700; }
.exe td { color: #f00; }
.sel, .focus { outline: 1px dotted #ddd; outline-offset: -1px; }
.sel td { background: #f0f0f0; color: #000; }
.sel td.name { background: linear-gradient(90deg, #000 29px, #f0f0f0 29px); }
.scroll { display: flex; height: 26px; margin-top: auto; background: #171717; border-top: 1px solid #000; }
.scroll button { display: flex; width: 27px; align-items: center; justify-content: center; }
.scroll svg { width: 8px; height: 12px; fill: none; stroke: #777; stroke-width: 2; }
.track { flex: 1; padding: 0 189px 2px 0; display: flex; }
.thumb { flex: 1; background: #4d4d4d; }
footer { display: flex; align-items: center; height: 34px; line-height: 34px; }
footer span { padding-top: 3px; }
footer svg { width: 14px; height: 14px; margin: 0 9px 0 1px; }
.f-attr { width: 173px; }
.f-ver { width: 428px; }
.f-attr2 { width: 406px; }

.status { display: flex; height: 36px; background: #ababab; color: #111; line-height: 38px; gap: 2px; padding-right: 27px; }
.ready { flex: 1; padding-left: 3px; }
.cell { display: flex; box-sizing: border-box; margin-top: 2px; padding-left: 2px; border: 1px solid #fff; border-width: 0 1px 1px 0; box-shadow: inset 1px 1px #a0a0a0; align-items: center; }
.s-file { width: 384px; }
.s-items { width: 180px; }
.s-small { width: 31px; padding-left: 3px; }
.s-small svg { width: 24px; height: 24px; }
.s-free { width: 162px; }

.taskbar { display: flex; height: 60px; background: #000; color: #fff; }
.start { display: flex; width: 75px; padding-left: 11px; align-items: center; }
.start svg { width: 48px; height: 48px; }
.task { display: flex; width: 61px; margin: 0 8px 0 6px; border-bottom: 3px solid transparent; align-items: center; justify-content: center; }
.task.on { border-color: #76b9ed; }
.task svg { width: 36px; height: 36px; }
.tray { display: flex; margin-left: auto; align-items: center; gap: 12px; }
.tray > svg { width: 24px; height: 24px; }
.net { display: flex; flex-direction: column; line-height: 25px; margin-right: 10px; }
.net span { display: flex; align-items: center; gap: 21px; }
.net svg { width: 14px; height: 14px; fill: #555; }
.mem { margin-right: 14px; }
.clock { display: flex; flex-direction: column; width: 92px; text-align: center; line-height: 28px; }
.peek { width: 6px; height: 60px; margin-left: -5px; border-left: 1px solid #666; }

.dialog { position: absolute; top: 604px; left: 981px; width: 603px; border: 1px solid #1f7fd0; background: #202020; box-shadow: 2px 3px 14px rgba(0, 0, 0, .55); }
.d-title { display: flex; height: 36px; padding: 0 16px 0 2px; background: #0078d7; color: #fff; align-items: center; justify-content: space-between; }
.d-title svg { width: 16px; height: 16px; fill: none; stroke: #fff; }
.d-body { display: flex; height: 124px; padding-left: 32px; gap: 10px; align-items: center; }
.d-body svg { width: 48px; height: 48px; margin-top: 4px; }
.d-body p { margin: 3px 0 0; font-size: 16px; line-height: 23px; }
.d-foot { display: flex; height: 80px; background: #646464; align-items: center; justify-content: flex-end; padding-right: 27px; }
.d-foot button { width: 112px; height: 40px; border: 1px solid #111; background: #333; color: #fff; box-shadow: inset 0 0 0 1px #fff; outline: 1px dotted #ccc; outline-offset: -4px; }

.context { position: absolute; top: 0; left: 0; box-sizing: border-box; display: flex; flex-direction: column; width: 335px; padding: 5px 0; border: 1px solid #a0a0a0; background: #2b2b2b; color: #fff; box-shadow: 3px 3px 5px rgba(0, 0, 0, .5); }
.context button { display: flex; height: 33px; padding: 3px 14px 0; align-items: center; text-align: left; }
.context hr { width: 305px; height: 1px; margin: 5px 14px; border: 0; background: #808080; }
.ci { width: 24px; height: 24px; margin: -5px 11px 0 0; }
.hint { margin-left: auto; padding-right: 15px; }
.chev { width: 12px; height: 20px; margin: -5px 0 0 auto; fill: none; stroke: #fff; }
</style>
